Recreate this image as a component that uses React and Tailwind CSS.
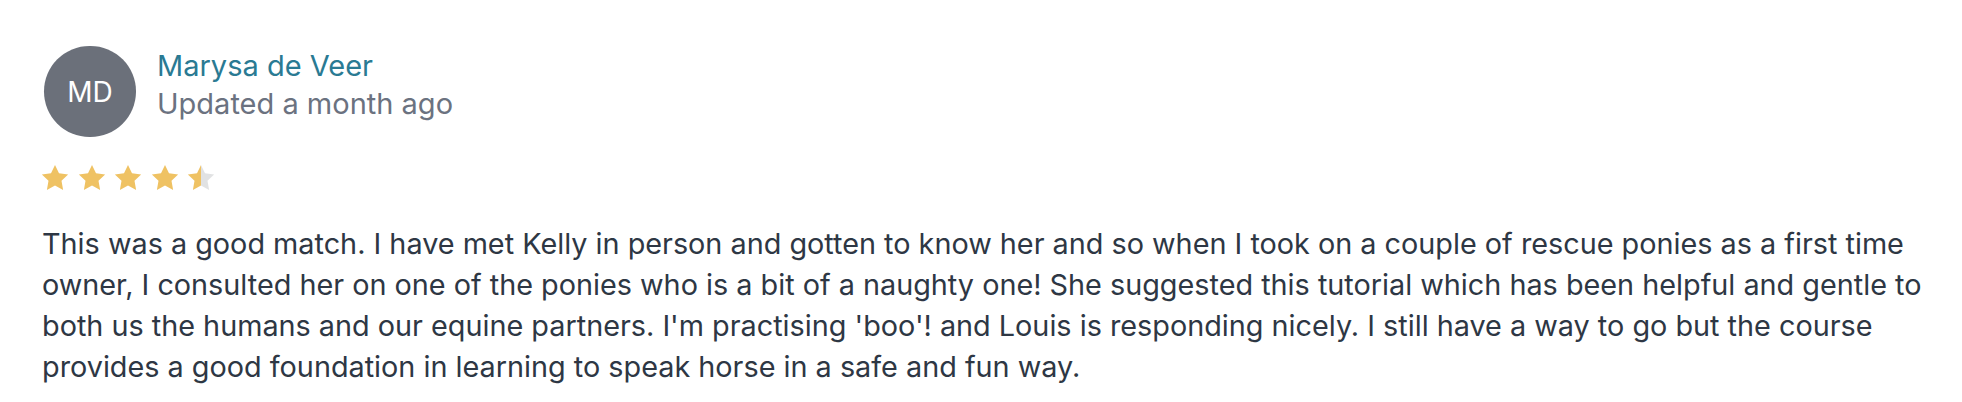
import React from "react";

const STAR = "12,1.5 15.2,8.1 22.5,9.1 17.2,14.2 18.5,21.5 12,18 5.5,21.5 6.8,14.2 1.5,9.1 8.8,8.1";

function Star({ fill = "full" }) {
  return (
    <svg width="30" height="30" viewBox="0 0 24 24">
      <defs>
        <linearGradient id="half" x1="0" x2="1" y1="0" y2="0">
          <stop offset="50%" stopColor="#efc263" />
          <stop offset="50%" stopColor="#e1e2e3" />
        </linearGradient>
      </defs>
      <polygon points={STAR} fill={fill === "half" ? "url(#half)" : "#efc263"} />
    </svg>
  );
}

export default function App() {
  return (
    <div className="bg-white w-[1962px] h-[402px] pl-[42px] pt-[46px] pr-[20px] font-['Inter',sans-serif]">
      <div className="flex items-start gap-[21px] pl-[2px]">
        <div className="w-[92px] h-[91px] rounded-full bg-[#6b707a] flex items-center justify-center text-white text-[28px]">
          MD
        </div>
        <div className="flex flex-col pt-[1px]">
          <div className="text-[29px] leading-[38px] text-[#2a7a93]">Marysa de Veer</div>
          <div className="text-[29px] leading-[38px] text-[#6b7280]">Updated a month ago</div>
        </div>
      </div>
      <div className="flex gap-[6.6px] mt-[26px] -ml-[2px]">
        <Star />
        <Star />
        <Star />
        <Star />
        <Star fill="half" />
      </div>
      <p className="mt-[30px] text-[28.8px] leading-[41px] text-[#2e3744] whitespace-nowrap">
        This was a good match. I have met Kelly in person and gotten to know her and so when I took on a couple of rescue ponies as a first time
        <br />
        owner, I consulted her on one of the ponies who is a bit of a naughty one! She suggested this tutorial which has been helpful and gentle to
        <br />
        both us the humans and our equine partners. I'm practising 'boo'! and Louis is responding nicely. I still have a way to go but the course
        <br />
        provides a good foundation in learning to speak horse in a safe and fun way.
      </p>
    </div>
  );
}
